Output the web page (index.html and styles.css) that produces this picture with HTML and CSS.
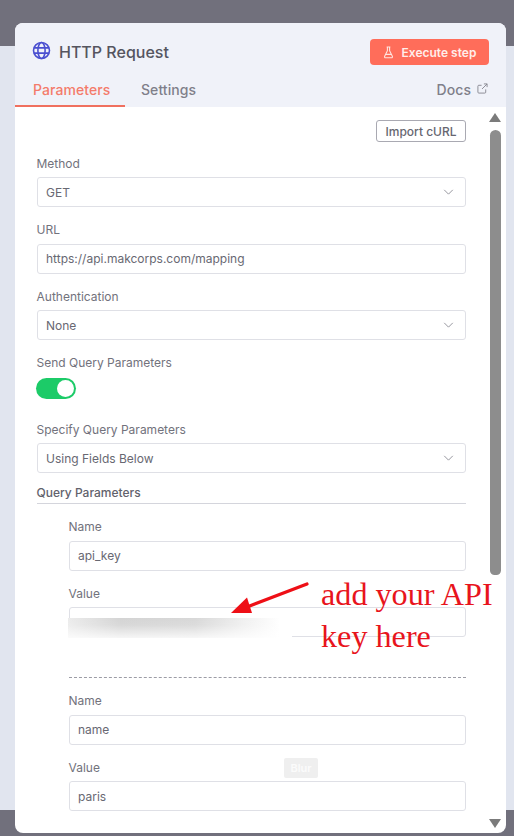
FILE: index.html
```html
<!DOCTYPE html>
<html lang="en">
<head>
<meta charset="utf-8">
<title>HTTP Request</title>
<link rel="stylesheet" href="styles.css">
</head>
<body>
<main class="panel">
  <header class="head">
    <div class="title-row">
      <div class="title">
        <svg class="globe" viewBox="0 0 20 20" fill="none" stroke="#4a4fd0" stroke-width="1.7"><circle cx="10" cy="10" r="8.4"/><ellipse cx="10" cy="10" rx="3.8" ry="8.4"/><path d="M2 7.2h16M2 12.8h16"/></svg>
        <span>HTTP Request</span>
      </div>
      <button class="exec">
        <svg class="flask" viewBox="0 0 12 14" fill="none" stroke="#ffe4de" stroke-width="1.2"><path d="M4 1h4M4.8 1v4L1.8 11.2a1.1 1.1 0 0 0 1 1.6h6.4a1.1 1.1 0 0 0 1-1.6L7.2 5V1M3.4 9h5.2"/></svg>
        Execute step
      </button>
    </div>
    <nav class="tabs">
      <span class="tab active">Parameters</span>
      <span class="tab">Settings</span>
      <span class="docs">Docs
        <svg class="ext" viewBox="0 0 12 12" fill="none" stroke="#85858f" stroke-width="1"><path d="M9.5 7v3a1 1 0 0 1-1 1H2a1 1 0 0 1-1-1V3.500a1 1 0 0 1 1-1h3M7.500 1H11v3.500M11 1L5.500 6.500"/></svg>
      </span>
    </nav>
  </header>

  <section class="body">
    <div class="form">
      <div class="import-row"><button class="import">Import cURL</button></div>

      <div class="field">
        <label>Method</label>
        <div class="box"><span>GET</span><svg class="chev" viewBox="0 0 12 7" fill="none" stroke="#85858f" stroke-width="1"><path d="M1 1l5 5 5-5"/></svg></div>
      </div>
      <div class="field">
        <label>URL</label>
        <div class="box"><span>https://api.makcorps.com/mapping</span></div>
      </div>
      <div class="field">
        <label>Authentication</label>
        <div class="box"><span>None</span><svg class="chev" viewBox="0 0 12 7" fill="none" stroke="#85858f" stroke-width="1"><path d="M1 1l5 5 5-5"/></svg></div>
      </div>
      <div class="field f-toggle">
        <label>Send Query Parameters</label>
        <div class="toggle"><i class="knob"></i></div>
      </div>
      <div class="field f-specify">
        <label>Specify Query Parameters</label>
        <div class="box"><span>Using Fields Below</span><svg class="chev" viewBox="0 0 12 7" fill="none" stroke="#85858f" stroke-width="1"><path d="M1 1l5 5 5-5"/></svg></div>
      </div>

      <div class="section-title">Query Parameters</div>

      <div class="params">
        <div class="field">
          <label>Name</label>
          <div class="box"><span>api_key</span></div>
        </div>
        <div class="field">
          <label>Value</label>
          <div class="box"></div>
        </div>
        <hr class="dash">
        <div class="field">
          <label>Name</label>
          <div class="box"><span>name</span></div>
        </div>
        <div class="field">
          <label>Value</label>
          <div class="box"><span>paris</span></div>
        </div>
      </div>
    </div>

    <div class="scroll">
      <i class="arrow-up"></i>
      <i class="thumb"></i>
      <i class="arrow-down"></i>
    </div>
  </section>
</main>

<div class="smudge"></div>
<div class="mask"></div>
<svg class="pointer" viewBox="0 0 78 32"><path d="M76 2 L16 25" stroke="#ee0f16" stroke-width="3.200" stroke-linecap="round"/><path d="M0 31 L16 15.500 L21 31 Z" fill="#ee0f16"/></svg>
<p class="note">add your API<br>key here</p>
<span class="blur-tag">Blur</span>
</body>
</html>
```
FILE: styles.css
```css
* { box-sizing: border-box; }

html, body { height: 100%; }

body {
  margin: 0;
  height: 836px;
  overflow: hidden;
  position: relative;
  padding: 23px 8px 3px 15px;
  font-family: Inter, "Liberation Sans", sans-serif;
  color: #5a5a64;
  background: linear-gradient(#71707c 0 46px, #e1e5ef 46px 810px, #71707c 810px);
}

.panel {
  height: 810px;
  border-radius: 8px;
  overflow: hidden;
  background: #fff;
  display: flex;
  flex-direction: column;
}

.head {
  height: 84px;
  background: #f0f2f9;
  display: flex;
  flex-direction: column;
}

.title-row {
  height: 50px;
  padding: 19px 17px 0 17px;
  display: flex;
  justify-content: space-between;
  align-items: flex-start;
}

.title {
  display: flex;
  align-items: center;
  gap: 8px;
  height: 20px;
  font-size: 16px;
  font-weight: 500;
  color: #55555f;
}

.globe { width: 19px; height: 19px; margin-top: -3px; }

.exec {
  height: 26px;
  width: 119px;
  margin-top: -3px;
  border: 0;
  border-radius: 4px;
  background: #ff6d5a;
  color: #ffeeea;
  font: 600 12px Inter, "Liberation Sans", sans-serif;
  display: flex;
  align-items: center;
  justify-content: center;
  gap: 8px;
  padding: 0;
}

.flask { width: 11px; height: 13px; }

.tabs {
  flex: 1;
  display: flex;
  align-items: flex-start;
  padding-right: 18px;
  font-size: 14px;
  font-weight: 500;
  letter-spacing: 0.06px;
  color: #7f7f8a;
}

.tab {
  height: 34px;
  line-height: 34px;
  padding: 0 16px;
}

.tab.active {
  color: #f47b6b;
  border-bottom: 2px solid #f0705f;
  width: 110px;
  padding: 0 0 0 18px;
}

.tab + .tab { padding-left: 16px; }

.docs {
  margin-left: auto;
  height: 34px;
  line-height: 34px;
  display: flex;
  align-items: center;
  gap: 6px;
}

.ext { width: 11px; height: 11px; margin-top: -3px; }

.body {
  flex: 1;
  min-height: 0;
  display: flex;
  position: relative;
}

.form {
  width: 451px;
  padding: 13px 0 0 21.500px;
  font-size: 12px;
}

.import-row {
  display: flex;
  justify-content: flex-end;
  height: 22px;
  margin-bottom: 13.500px;
}

.import {
  width: 90px;
  height: 22px;
  padding: 0;
  border: 1px solid #a9a9b2;
  border-radius: 3px;
  background: #fff;
  color: #666670;
  font: 500 12px Inter, "Liberation Sans", sans-serif;
}

.field { margin-bottom: 15px; }

.field label {
  display: block;
  height: 15px;
  line-height: 15px;
  margin-bottom: 6.500px;
  font-size: 12px;
  color: #72727c;
}

.box {
  height: 30px;
  border: 1px solid #dfe0e6;
  border-radius: 3px;
  background: #fff;
  display: flex;
  align-items: center;
  justify-content: space-between;
  padding: 0 11px 0 8.500px;
  font-size: 12px;
  color: #686872;
}

.chev { width: 11px; height: 6px; }

.f-toggle { margin-bottom: 0; height: 66.500px; }
.f-toggle label { margin-bottom: 8px; }

.toggle {
  width: 40px;
  height: 21px;
  margin-left: -1px;
  border-radius: 11px;
  background: #1ccb68;
  position: relative;
}

.knob {
  position: absolute;
  right: 2px;
  top: 2px;
  width: 17px;
  height: 17px;
  border-radius: 50%;
  background: #fff;
}

.f-specify { margin-bottom: 0; }

.section-title {
  height: 31px;
  line-height: 15px;
  padding-top: 12px;
  border-bottom: 1px solid #d4d5dc;
  font-size: 12px;
  font-weight: 500;
  color: #62626c;
}

.params {
  padding: 15px 0 0 32px;
}

.dash {
  margin: 40px 0 15px;
  height: 0;
  border: 0;
  border-top: 1px dashed #9c9ca5;
}

.scroll {
  flex: 1;
  position: relative;
}

.arrow-up, .arrow-down {
  position: absolute;
  left: 23px;
  width: 0;
  height: 0;
  border-left: 6.500px solid transparent;
  border-right: 6.500px solid transparent;
}

.arrow-up { top: 6px; border-bottom: 9px solid #7b7b7b; }
.arrow-down { bottom: 5px; border-top: 9px solid #7b7b7b; }

.thumb {
  position: absolute;
  left: 24px;
  top: 23px;
  width: 11px;
  height: 445px;
  border-radius: 6px 6px 5px 5px;
  background: #8d8d8d;
}

.smudge {
  position: absolute;
  left: 68px;
  top: 618px;
  width: 212px;
  height: 20px;
  background:
    linear-gradient(180deg, rgba(255,255,255,0) 0, rgba(255,255,255,.1) 35%, rgba(255,255,255,.8) 100%),
    linear-gradient(90deg, #ececec 0, #d4d4d4 25%, #d8d8d8 60%, #efefef 82%, #fff 100%);
}

.mask {
  position: absolute;
  left: 280px;
  top: 617px;
  width: 12px;
  height: 21px;
  background: #fff;
}

.pointer {
  position: absolute;
  left: 231px;
  top: 582px;
  width: 78px;
  height: 32px;
}

.note {
  position: absolute;
  left: 321px;
  top: 573px;
  margin: 0;
  font: 400 32.200px/42px "Liberation Serif", serif;
  color: #e8141c;
  white-space: nowrap;
}

.blur-tag {
  position: absolute;
  left: 284px;
  top: 758px;
  width: 34px;
  height: 20px;
  line-height: 20px;
  text-align: center;
  border-radius: 2px;
  background: #efefef;
  color: #fbfbfb;
  font-size: 11px;
  font-weight: 600;
}
```
